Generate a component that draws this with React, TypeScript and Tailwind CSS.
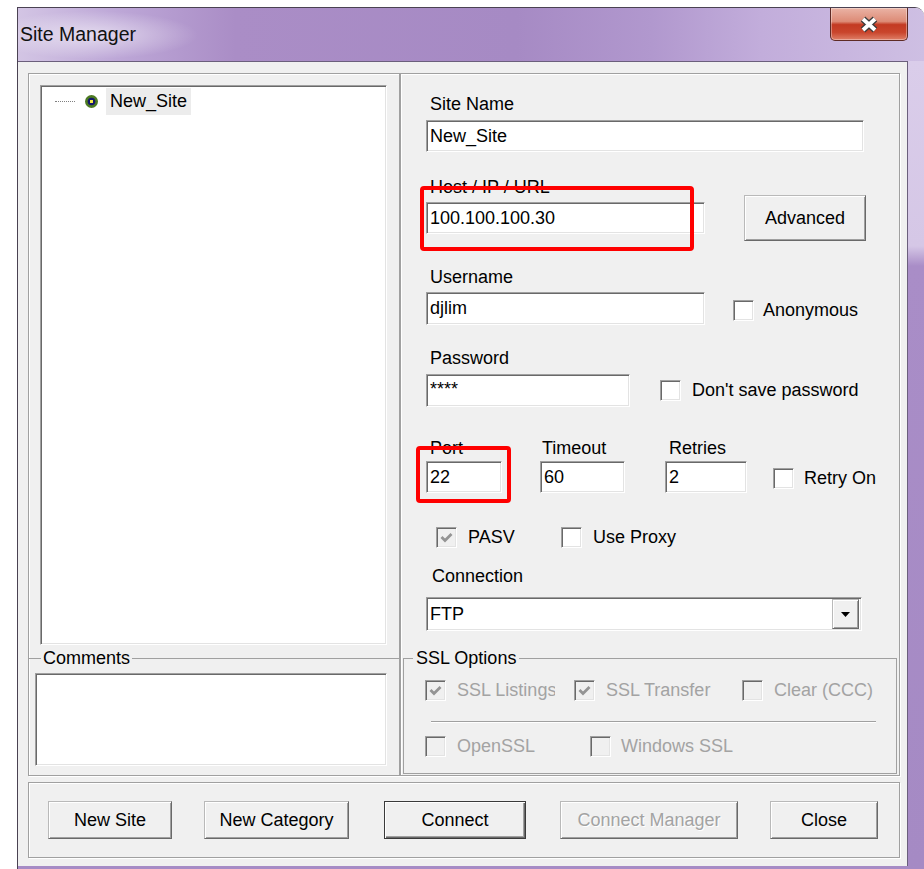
import React from "react";

const SUNKEN =
  "border border-t-[#a0a0a0] border-l-[#a0a0a0] border-r-white border-b-white shadow-[inset_1px_1px_0_#696969,inset_-1px_-1px_0_#e3e3e3]";
const RAISED =
  "border border-t-[#b9b9b9] border-l-[#b9b9b9] border-r-[#696969] border-b-[#696969] shadow-[inset_1px_1px_0_#ffffff,inset_-1px_-1px_0_#a0a0a0]";
const ETCHED = "border border-[#a0a0a0] shadow-[inset_1px_1px_0_#ffffff,1px_1px_0_#ffffff]";

function Field({ value, className = "" }: { value?: string; className?: string }) {
  return (
    <div className={`${SUNKEN} bg-white flex items-center pl-[3px] whitespace-nowrap overflow-hidden ${className}`}>
      {value}
    </div>
  );
}

function Box({ checked = false, disabled = false }: { checked?: boolean; disabled?: boolean }) {
  return (
    <div
      className={`${SUNKEN} w-[21px] h-[21px] shrink-0 flex items-center justify-center ${
        disabled ? "bg-[#f0f0f0]" : "bg-white"
      }`}
    >
      {checked && (
        <svg width="13" height="11" viewBox="0 0 13 11">
          <path
            d="M1.5 5 L5 8.5 L11.5 2"
            fill="none"
            stroke={disabled ? "#949494" : "#000"}
            strokeWidth="2.8"
          />
        </svg>
      )}
    </div>
  );
}

function Button({
  label,
  className = "",
  disabled = false,
  primary = false,
}: {
  label: string;
  className?: string;
  disabled?: boolean;
  primary?: boolean;
}) {
  const frame = primary
    ? "border border-[#3a3a3a] shadow-[inset_1px_1px_0_#ffffff,inset_-1px_-1px_0_#696969,inset_-2px_-2px_0_#a0a0a0]"
    : RAISED;
  return (
    <div
      className={`${frame} bg-[#f0f0f0] flex items-center justify-center whitespace-nowrap ${
        disabled ? "text-[#a3a3a3] [text-shadow:1px_1px_0_#ffffff]" : "text-black"
      } ${className}`}
    >
      {label}
    </div>
  );
}

export default function App() {
  return (
    <div className="relative w-[924px] h-[869px] bg-white overflow-hidden font-['Liberation_Sans',Arial,sans-serif] text-[18px] leading-[21px] text-black">
      <div className="ml-[17px] mt-[7px] h-[862px] flex flex-col border-t border-l border-[#4a4252] rounded-tr-[9px] overflow-hidden">
        {/* caption */}
        <div className="h-[53px] shrink-0 flex items-start bg-[radial-gradient(ellipse_105px_24px_at_75px_27px,rgba(255,255,255,0.55),rgba(255,255,255,0)),linear-gradient(90deg,#d3c5e4_0%,#bda7d7_11%,#aa8dc6_24%,#a68ac4_55%,#b198ce_70%,#c2addb_82%,#cebfe3_100%)]">
          <div className="self-center pl-[2px] text-[19.5px] text-[#111]">Site Manager</div>
          <div className="ml-auto mr-[16px] w-[78px] h-[33px] border border-t-0 border-[#5e2b25] rounded-b-[5px] bg-[linear-gradient(180deg,#eab3a5_0%,#dd8b76_42%,#c33a22_52%,#c9452c_76%,#df8068_100%)] shadow-[inset_0_0_0_1px_rgba(255,255,255,0.35)] flex items-center justify-center">
            <svg width="22" height="17" viewBox="0 0 22 17">
              <path d="M5 3 L17 14 M17 3 L5 14" stroke="#3b3b3b" strokeWidth="6.5" />
              <path d="M5 3 L17 14 M17 3 L5 14" stroke="#ffffff" strokeWidth="3.8" />
            </svg>
          </div>
        </div>

        <div className="flex flex-1 min-h-0 bg-[#a68bc5]">
          {/* client area */}
          <div className="w-[890px] h-[805px] self-start bg-[#f0f0f0] border-t border-r border-[#6b5f7c] pt-[11px] pl-[10px] pr-[7px] flex flex-col">
            <div className="flex h-[703px]">
              {/* site tree + comments */}
              <div className={`w-[372px] flex flex-col ${ETCHED}`}>
                <div className={`${SUNKEN} bg-white ml-[11px] mt-[11px] w-[347px] h-[560px]`}>
                  <div className="mt-[2px] h-[27px] flex items-center">
                    <div className="ml-[14px] w-[20px] border-t border-dotted border-[#808080]" />
                    <svg className="ml-[10px]" width="13" height="13" viewBox="0 0 13 13">
                      <circle cx="6.5" cy="6.5" r="6.5" fill="#4c7a21" />
                      <circle cx="6.5" cy="6.5" r="3.8" fill="#14166c" />
                      <rect x="5" y="5" width="3" height="3" fill="#f2e94a" />
                    </svg>
                    <div className="ml-[8px] h-full px-[4px] bg-[#ececec] flex items-center">New_Site</div>
                  </div>
                </div>
                <fieldset className="-mx-[1px] mt-[3px] border-t border-[#a0a0a0]">
                  <legend className="ml-[13px] px-[2px]">Comments</legend>
                  <div className={`${SUNKEN} bg-white ml-[7px] mt-[4px] w-[352px] h-[93px]`} />
                </fieldset>
              </div>

              {/* site settings */}
              <div className={`w-[500px] flex flex-col ${ETCHED}`}>
                <div className="pl-[25px] flex flex-col">
                  <div className="mt-[20px] ml-[4px]">Site Name</div>
                  <Field value="New_Site" className="mt-[5px] w-[438px] h-[32px]" />

                  <div className="mt-[25px] flex items-start">
                    <div className="flex flex-col">
                      <div className="ml-[4px]">Host / IP / URL</div>
                      <Field value="100.100.100.30" className="mt-[4px] w-[279px] h-[32px]" />
                    </div>
                    <Button label="Advanced" className="ml-[39px] mt-[18px] w-[122px] h-[46px]" />
                  </div>

                  <div className="mt-[26px] flex items-start">
                    <div className="flex flex-col">
                      <div className="ml-[4px]">Username</div>
                      <Field value="djlim" className="mt-[4px] w-[279px] h-[33px]" />
                    </div>
                    <div className="ml-[28px] mt-[33px] flex items-center">
                      <Box />
                      <span className="ml-[9px]">Anonymous</span>
                    </div>
                  </div>

                  <div className="mt-[23px] flex items-start">
                    <div className="flex flex-col">
                      <div className="ml-[4px]">Password</div>
                      <Field value="****" className="mt-[5px] w-[204px] h-[33px] !items-start pt-[4px]" />
                    </div>
                    <div className="ml-[30px] mt-[32px] flex items-center">
                      <Box />
                      <span className="ml-[11px]">Don't save password</span>
                    </div>
                  </div>

                  <div className="mt-[31px] flex items-start">
                    <div className="w-[76px] flex flex-col">
                      <div className="ml-[4px]">Port</div>
                      <Field value="22" className="mt-[2px] h-[32px]" />
                    </div>
                    <div className="ml-[38px] w-[85px] flex flex-col">
                      <div className="ml-[2px]">Timeout</div>
                      <Field value="60" className="mt-[2px] h-[32px]" />
                    </div>
                    <div className="ml-[40px] w-[82px] flex flex-col">
                      <div className="ml-[4px]">Retries</div>
                      <Field value="2" className="mt-[2px] h-[32px]" />
                    </div>
                    <div className="ml-[26px] mt-[30px] flex items-center">
                      <Box />
                      <span className="ml-[10px]">Retry On</span>
                    </div>
                  </div>

                  <div className="mt-[33px] h-[22px] flex items-center">
                    <div className="ml-[10px] w-[125px] flex items-center">
                      <Box checked disabled />
                      <span className="ml-[11px]">PASV</span>
                    </div>
                    <div className="flex items-center">
                      <Box />
                      <span className="ml-[11px]">Use Proxy</span>
                    </div>
                  </div>

                  <div className="mt-[18px] ml-[6px]">Connection</div>
                  <div className={`${SUNKEN} bg-white mt-[10px] w-[436px] h-[34px] flex items-center pl-[3px] pr-[2px]`}>
                    <span className="flex-1">FTP</span>
                    <div className={`${RAISED} bg-[#f0f0f0] w-[27px] h-[30px] flex items-center justify-center`}>
                      <svg width="9" height="5" viewBox="0 0 9 5">
                        <path d="M0 0 H9 L4.5 5 Z" fill="#000" />
                      </svg>
                    </div>
                  </div>
                </div>

                <fieldset className="ml-[2px] mt-[17px] w-[494px] h-[126px] border border-[#a0a0a0] text-[#a3a3a3]">
                  <legend className="ml-[9px] px-[3px] text-black">SSL Options</legend>
                  <div className="pl-[21px]">
                    <div className="mt-[11px] flex items-center">
                      <div className="w-[149px] flex items-center">
                        <Box checked disabled />
                        <span className="ml-[11px] w-[98px] overflow-hidden whitespace-nowrap">SSL Listings</span>
                      </div>
                      <div className="w-[168px] flex items-center">
                        <Box checked disabled />
                        <span className="ml-[11px] whitespace-nowrap">SSL Transfer</span>
                      </div>
                      <div className="flex items-center">
                        <Box disabled />
                        <span className="ml-[11px] whitespace-nowrap">Clear (CCC)</span>
                      </div>
                    </div>
                    <div className="mt-[20px] ml-[6px] w-[445px] border-t border-b border-t-[#a0a0a0] border-b-white" />
                    <div className="mt-[13px] flex items-center">
                      <div className="w-[165px] flex items-center">
                        <Box disabled />
                        <span className="ml-[11px]">OpenSSL</span>
                      </div>
                      <div className="flex items-center">
                        <Box disabled />
                        <span className="ml-[10px]">Windows SSL</span>
                      </div>
                    </div>
                  </div>
                </fieldset>
              </div>
            </div>

            {/* command buttons */}
            <div className={`mt-[6px] h-[76px] flex items-start pt-[18px] pl-[19px] ${ETCHED}`}>
              <Button label="New Site" className="w-[124px] h-[38px]" />
              <Button label="New Category" className="ml-[32px] w-[145px] h-[38px]" />
              <Button label="Connect" primary className="ml-[35px] w-[142px] h-[38px]" />
              <Button label="Connect Manager" disabled className="ml-[34px] w-[178px] h-[38px]" />
              <Button label="Close" className="ml-[32px] w-[108px] h-[38px]" />
            </div>
          </div>

          {/* right window frame */}
          <div className="flex-1 self-stretch bg-[linear-gradient(180deg,#dacdea_0px,#d5c7e6_185px,#a98dc7_205px,#a58ac4_100%)]" />
        </div>
      </div>

      {/* annotation marks */}
      <div className="absolute left-[420px] top-[186px] w-[274px] h-[65px] border-4 border-[#ff0000] rounded-[4px]" />
      <div className="absolute left-[416px] top-[446px] w-[95px] h-[57px] border-4 border-[#ff0000] rounded-[4px]" />
    </div>
  );
}
